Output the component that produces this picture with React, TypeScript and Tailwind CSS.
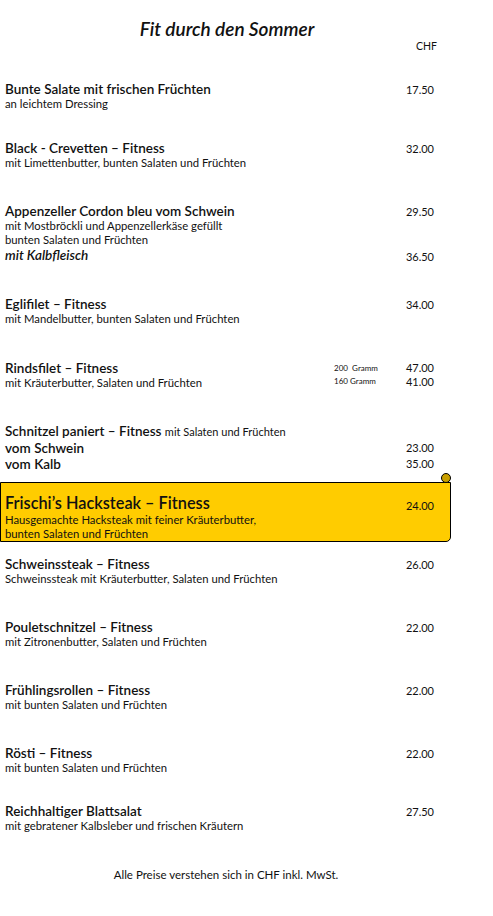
type Item = { title: string; lines: string[]; price: string; mt: string }

const items2: Item[] = [
  { title: "Schweinssteak – Fitness", lines: ["Schweinssteak mit Kräuterbutter, Salaten und Früchten"], price: "26.00", mt: "mt-[14px]" },
  { title: "Pouletschnitzel – Fitness", lines: ["mit Zitronenbutter, Salaten und Früchten"], price: "22.00", mt: "mt-[33px]" },
  { title: "Frühlingsrollen – Fitness", lines: ["mit bunten Salaten und Früchten"], price: "22.00", mt: "mt-[33px]" },
  { title: "Rösti – Fitness", lines: ["mit bunten Salaten und Früchten"], price: "22.00", mt: "mt-[33px]" },
  { title: "Reichhaltiger Blattsalat", lines: ["mit gebratener Kalbsleber und frischen Kräutern"], price: "27.50", mt: "mt-[28px]" },
]

function Row({ title, lines, price, mt }: Item) {
  return (
    <div className={`flex justify-between ${mt}`}>
      <div>
        <div className="text-[13.5px] leading-[16px] font-semibold">{title}</div>
        {lines.map(l => (
          <div key={l} className="text-[11.3px] leading-[14px]">{l}</div>
        ))}
      </div>
      <div className="text-[11px] leading-[16px] pt-[1px]">{price}</div>
    </div>
  )
}

export default function App() {
  return (
    <div className="w-[493px] h-[916px] bg-white text-[#111] font-['Lato',sans-serif] overflow-hidden">
      <div className="pt-[18px] text-center pr-[39px] text-[19px] leading-[22px] italic font-semibold">Fit durch den Sommer</div>
      <div className="w-[437px] text-right text-[10.5px] leading-[14px] mt-[-1px]">CHF</div>

      <div className="pl-[5px] w-[434px] mt-[28px] flex flex-col">
        <Row title="Bunte Salate mit frischen Früchten" lines={["an leichtem Dressing"]} price="17.50" mt="mt-0" />
        <Row title="Black - Crevetten – Fitness" lines={["mit Limettenbutter, bunten Salaten und Früchten"]} price="32.00" mt="mt-[29px]" />

        <div className="flex justify-between mt-[33px]">
          <div>
            <div className="text-[13.5px] leading-[16px] font-semibold">Appenzeller Cordon bleu vom Schwein</div>
            <div className="text-[11.3px] leading-[14px]">mit Mostbröckli und Appenzellerkäse gefüllt</div>
            <div className="text-[11.3px] leading-[14px]">bunten Salaten und Früchten</div>
            <div className="text-[13.5px] leading-[16px] font-semibold italic">mit Kalbfleisch</div>
          </div>
          <div className="flex flex-col justify-between text-[11px] leading-[16px] pt-[1px]">
            <div className="mr-[-3px]">29.50</div>
            <div className="relative top-[2px]">36.50</div>
          </div>
        </div>

        <Row title="Eglifilet – Fitness" lines={["mit Mandelbutter, bunten Salaten und Früchten"]} price="34.00" mt="mt-[33px]" />

        <div className="flex justify-between mt-[34px]">
          <div>
            <div className="text-[13.5px] leading-[16px] font-semibold">Rindsfilet – Fitness</div>
            <div className="text-[11.3px] leading-[14px]">mit Kräuterbutter, Salaten und Früchten</div>
          </div>
          <div className="flex gap-[28px]">
            <div className="text-[8px] pt-[2px]">
              <div className="leading-[13px]">200&nbsp; Gramm</div>
              <div className="leading-[13px]">160 Gramm</div>
            </div>
            <div className="text-[11px] leading-[14px] pt-[1px] text-right">
              <div>47.00</div>
              <div>41.00</div>
            </div>
          </div>
        </div>

        <div className="flex justify-between mt-[33px]">
          <div>
            <div className="text-[13.5px] leading-[16px] font-semibold">
              Schnitzel paniert – Fitness <span className="text-[11px] font-normal">mit Salaten und Früchten</span>
            </div>
            <div className="text-[13.5px] leading-[16px] font-semibold">vom Schwein</div>
            <div className="text-[13.5px] leading-[16px] font-semibold">vom Kalb</div>
          </div>
          <div className="text-[11px] leading-[16px] pt-[17px] text-right">
            <div>23.00</div>
            <div>35.00</div>
          </div>
        </div>
      </div>

      <div className="relative mt-[10px] w-[451px] bg-[#ffcc00] border border-black rounded-br-[5px] pl-[4px] pr-[16px] pt-[10px] flex justify-between">
        <div>
          <div className="text-[16.3px] leading-[20px] font-semibold">Frischi’s Hacksteak – Fitness</div>
          <div className="text-[11.3px] leading-[14px]">Hausgemachte Hacksteak mit feiner Kräuterbutter,</div>
          <div className="text-[11.3px] leading-[14px]">bunten Salaten und Früchten</div>
        </div>
        <div className="text-[11px] leading-[16px] pt-[5px]">24.00</div>
        <div className="absolute right-[-1px] top-[-10px] w-[10px] h-[10px] rounded-full bg-[#c9a000] border border-black" />
      </div>

      <div className="pl-[5px] w-[434px] flex flex-col">
        {items2.map(it => <Row key={it.title} {...it} />)}
      </div>

      <div className="mt-[35px] text-center pr-[41px] text-[11.5px] leading-[14px]">Alle Preise verstehen sich in CHF inkl. MwSt.</div>
    </div>
  )
}
